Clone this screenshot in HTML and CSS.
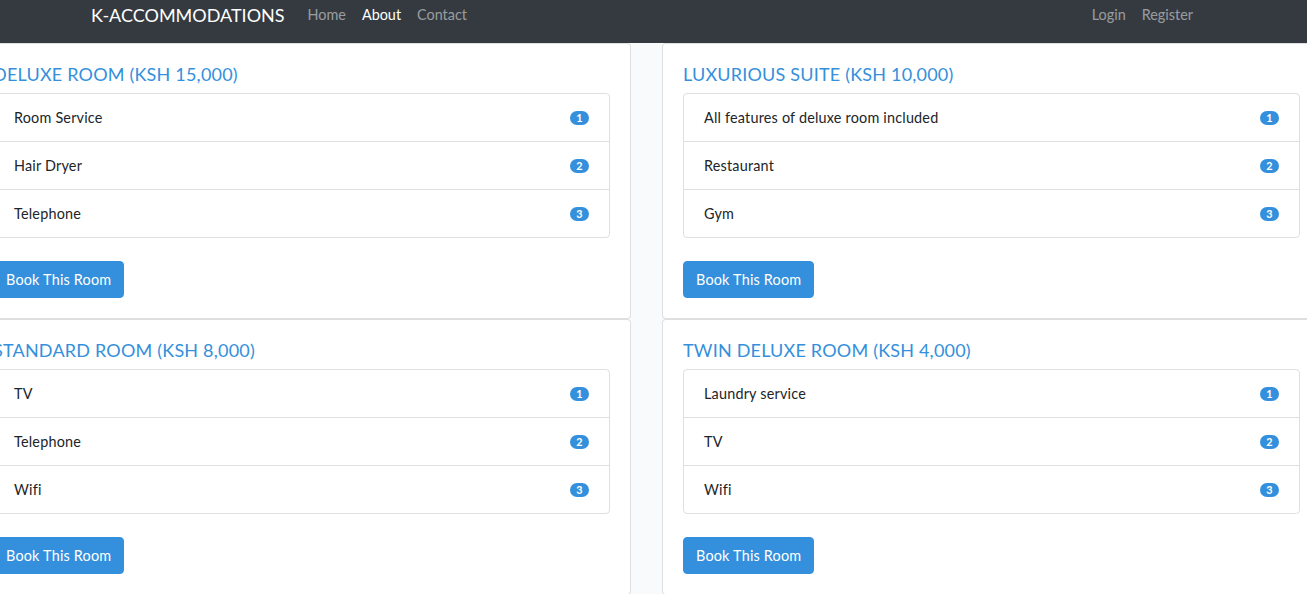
FILE: index.html
```html
<!DOCTYPE html>
<html lang="en">
<head>
<meta charset="utf-8">
<title>K-Accommodations</title>
<link rel="stylesheet" href="styles.css">
</head>
<body>
<nav class="navbar">
  <div class="nav-container">
    <a class="brand" href="#">K-ACCOMMODATIONS</a>
    <ul class="nav-links">
      <li><a class="nav-link" href="#">Home</a></li>
      <li><a class="nav-link active" href="#">About</a></li>
      <li><a class="nav-link" href="#">Contact</a></li>
    </ul>
    <ul class="nav-links nav-right">
      <li><a class="nav-link" href="#">Login</a></li>
      <li><a class="nav-link" href="#">Register</a></li>
    </ul>
  </div>
</nav>
<main class="rooms">
  <div class="card">
    <h5 class="card-title">DELUXE ROOM (KSH 15,000)</h5>
    <ul class="list-group">
      <li class="list-item">Room Service <span class="badge">1</span></li>
      <li class="list-item">Hair Dryer <span class="badge">2</span></li>
      <li class="list-item">Telephone <span class="badge">3</span></li>
    </ul>
    <a class="btn" href="#">Book This Room</a>
  </div>
  <div class="card">
    <h5 class="card-title">LUXURIOUS SUITE (KSH 10,000)</h5>
    <ul class="list-group">
      <li class="list-item">All features of deluxe room included <span class="badge">1</span></li>
      <li class="list-item">Restaurant <span class="badge">2</span></li>
      <li class="list-item">Gym <span class="badge">3</span></li>
    </ul>
    <a class="btn" href="#">Book This Room</a>
  </div>
  <div class="card">
    <h5 class="card-title">STANDARD ROOM (KSH 8,000)</h5>
    <ul class="list-group">
      <li class="list-item">TV <span class="badge">1</span></li>
      <li class="list-item">Telephone <span class="badge">2</span></li>
      <li class="list-item">Wifi <span class="badge">3</span></li>
    </ul>
    <a class="btn" href="#">Book This Room</a>
  </div>
  <div class="card">
    <h5 class="card-title">TWIN DELUXE ROOM (KSH 4,000)</h5>
    <ul class="list-group">
      <li class="list-item">Laundry service <span class="badge">1</span></li>
      <li class="list-item">TV <span class="badge">2</span></li>
      <li class="list-item">Wifi <span class="badge">3</span></li>
    </ul>
    <a class="btn" href="#">Book This Room</a>
  </div>
</main>
</body>
</html>
```

FILE: styles.css
```css
* { box-sizing: border-box; }

html, body {
  margin: 0;
  padding: 0;
  overflow: hidden;
}

body {
  background: #f8fafc;
  font-family: "Lato", "Open Sans", sans-serif;
  font-size: 14.4px;
  line-height: 1.6;
  color: #212529;
}

.navbar {
  background: #343a40;
  height: 43px;
}

.nav-container {
  width: 1110px;
  margin-left: 91px;
  display: flex;
  align-items: center;
  height: 30px;
}

.brand {
  color: #fff;
  text-decoration: none;
  font-size: 18px;
  margin-right: 15px;
  line-height: 30px;
}

.nav-links {
  list-style: none;
  margin: 0;
  padding: 0;
  display: flex;
}

.nav-right { margin-left: auto; }

.nav-link {
  display: block;
  padding: 0 8px;
  color: rgba(255, 255, 255, 0.5);
  text-decoration: none;
  line-height: 30px;
}

.nav-link.active { color: #fff; }

.rooms {
  display: grid;
  grid-template-columns: 659px 659px;
  column-gap: 31px;
  margin-left: -28px;
}

.card {
  background: #fff;
  border: 1px solid rgba(0, 0, 0, 0.125);
  border-radius: 4px;
  padding: 20px;
  display: flex;
  flex-direction: column;
  align-items: flex-start;
  letter-spacing: 0.2px;
}

.card-title {
  margin: 0 0 8px;
  font-size: 18px;
  font-weight: 400;
  line-height: 21px;
  color: #3490dc;
}

.list-group {
  list-style: none;
  margin: 0 0 23px;
  padding: 0;
  align-self: stretch;
  border: 1px solid rgba(0, 0, 0, 0.125);
  border-radius: 4px;
}

.list-item {
  display: flex;
  justify-content: space-between;
  align-items: center;
  padding: 12px 20px;
  border-top: 1px solid rgba(0, 0, 0, 0.125);
}

.list-item:first-child { border-top: 0; }

.badge {
  background: #3490dc;
  color: #fff;
  font-size: 10.8px;
  font-weight: 700;
  line-height: 10px;
  padding: 2px 6.5px;
  border-radius: 10rem;
  letter-spacing: 0;
}

.btn {
  display: inline-block;
  background: #3490dc;
  border: 1px solid #3490dc;
  color: #fff;
  text-decoration: none;
  padding: 6px 12px;
  border-radius: 4px;
  line-height: 23px;
}
```
